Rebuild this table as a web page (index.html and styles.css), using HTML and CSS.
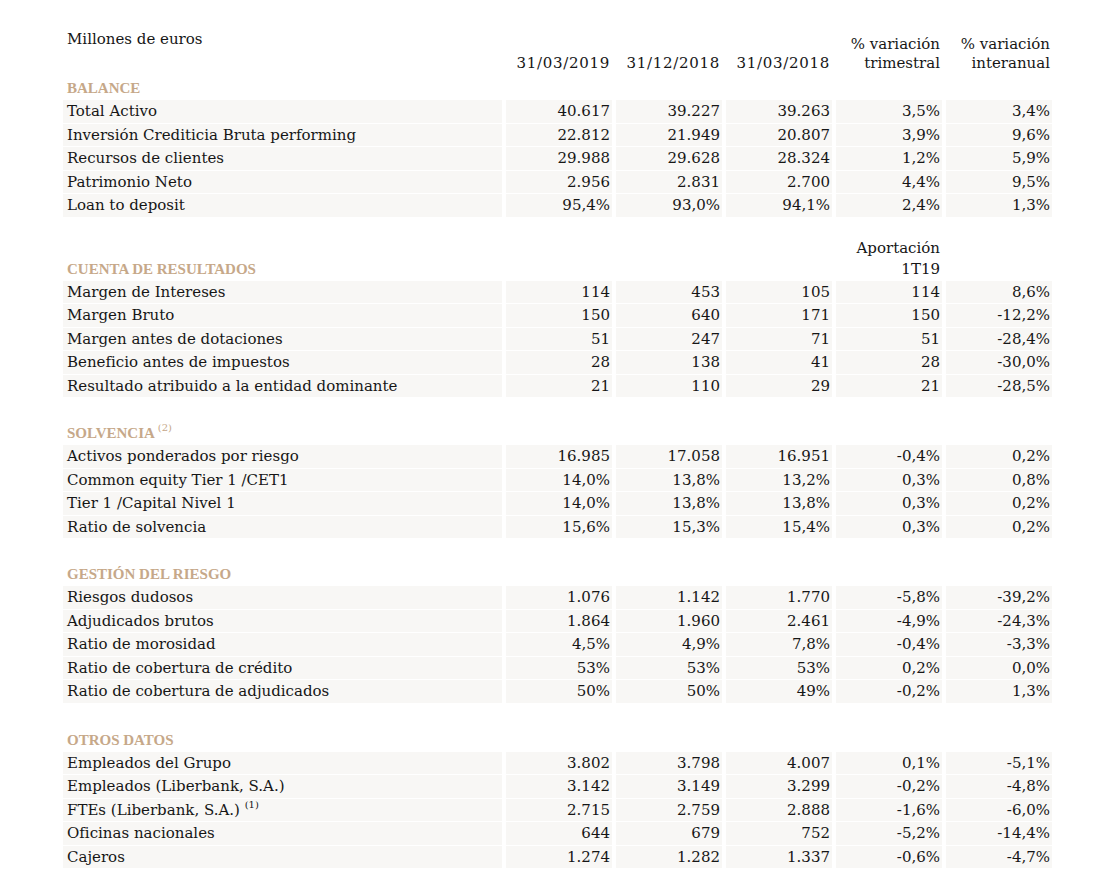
FILE: index.html
```html
<!DOCTYPE html>
<html lang="es">
<head>
<meta charset="utf-8">
<title>Datos relevantes</title>
<link rel="stylesheet" href="styles.css">
</head>
<body>
<div class="page">
<table class="kpi">
  <colgroup>
    <col class="c-label"><col class="c-num"><col class="c-num"><col class="c-num"><col class="c-num"><col class="c-num">
  </colgroup>
  <tr class="head">
    <td class="unit">Millones de euros</td>
    <td class="hcell date">31/03/2019</td>
    <td class="hcell date">31/12/2018</td>
    <td class="hcell date">31/03/2018</td>
    <td class="hcell">% variación<br>trimestral</td>
    <td class="hcell">% variación<br>interanual</td>
  </tr>
  <tr class="sec"><td class="title">BALANCE</td><td></td><td></td><td></td><td></td><td></td></tr>
  <tr class="row"><td>Total Activo</td><td>40.617</td><td>39.227</td><td>39.263</td><td>3,5%</td><td>3,4%</td></tr>
  <tr class="row"><td>Inversión Crediticia Bruta performing</td><td>22.812</td><td>21.949</td><td>20.807</td><td>3,9%</td><td>9,6%</td></tr>
  <tr class="row"><td>Recursos de clientes</td><td>29.988</td><td>29.628</td><td>28.324</td><td>1,2%</td><td>5,9%</td></tr>
  <tr class="row"><td>Patrimonio Neto</td><td>2.956</td><td>2.831</td><td>2.700</td><td>4,4%</td><td>9,5%</td></tr>
  <tr class="row"><td>Loan to deposit</td><td>95,4%</td><td>93,0%</td><td>94,1%</td><td>2,4%</td><td>1,3%</td></tr>

  <tr class="gap gap-short"><td colspan="6"></td></tr>
  <tr class="sec sec-tall"><td class="title">CUENTA DE RESULTADOS</td><td></td><td></td><td></td><td class="hcell2">Aportación<br>1T19</td><td></td></tr>
  <tr class="row"><td>Margen de Intereses</td><td>114</td><td>453</td><td>105</td><td>114</td><td>8,6%</td></tr>
  <tr class="row"><td>Margen Bruto</td><td>150</td><td>640</td><td>171</td><td>150</td><td>-12,2%</td></tr>
  <tr class="row"><td>Margen antes de dotaciones</td><td>51</td><td>247</td><td>71</td><td>51</td><td>-28,4%</td></tr>
  <tr class="row"><td>Beneficio antes de impuestos</td><td>28</td><td>138</td><td>41</td><td>28</td><td>-30,0%</td></tr>
  <tr class="row"><td>Resultado atribuido a la entidad dominante</td><td>21</td><td>110</td><td>29</td><td>21</td><td>-28,5%</td></tr>

  <tr class="gap"><td colspan="6"></td></tr>
  <tr class="sec"><td class="title">SOLVENCIA <sup class="note">(2)</sup></td><td></td><td></td><td></td><td></td><td></td></tr>
  <tr class="row"><td>Activos ponderados por riesgo</td><td>16.985</td><td>17.058</td><td>16.951</td><td>-0,4%</td><td>0,2%</td></tr>
  <tr class="row"><td>Common equity Tier 1 /CET1</td><td>14,0%</td><td>13,8%</td><td>13,2%</td><td>0,3%</td><td>0,8%</td></tr>
  <tr class="row"><td>Tier 1 /Capital Nivel 1</td><td>14,0%</td><td>13,8%</td><td>13,8%</td><td>0,3%</td><td>0,2%</td></tr>
  <tr class="row"><td>Ratio de solvencia</td><td>15,6%</td><td>15,3%</td><td>15,4%</td><td>0,3%</td><td>0,2%</td></tr>

  <tr class="gap"><td colspan="6"></td></tr>
  <tr class="sec"><td class="title">GESTIÓN DEL RIESGO</td><td></td><td></td><td></td><td></td><td></td></tr>
  <tr class="row"><td>Riesgos dudosos</td><td>1.076</td><td>1.142</td><td>1.770</td><td>-5,8%</td><td>-39,2%</td></tr>
  <tr class="row"><td>Adjudicados brutos</td><td>1.864</td><td>1.960</td><td>2.461</td><td>-4,9%</td><td>-24,3%</td></tr>
  <tr class="row"><td>Ratio de morosidad</td><td>4,5%</td><td>4,9%</td><td>7,8%</td><td>-0,4%</td><td>-3,3%</td></tr>
  <tr class="row"><td>Ratio de cobertura de crédito</td><td>53%</td><td>53%</td><td>53%</td><td>0,2%</td><td>0,0%</td></tr>
  <tr class="row"><td>Ratio de cobertura de adjudicados</td><td>50%</td><td>50%</td><td>49%</td><td>-0,2%</td><td>1,3%</td></tr>

  <tr class="gap gap-long"><td colspan="6"></td></tr>
  <tr class="sec"><td class="title">OTROS DATOS</td><td></td><td></td><td></td><td></td><td></td></tr>
  <tr class="row"><td>Empleados del Grupo</td><td>3.802</td><td>3.798</td><td>4.007</td><td>0,1%</td><td>-5,1%</td></tr>
  <tr class="row"><td>Empleados (Liberbank, S.A.)</td><td>3.142</td><td>3.149</td><td>3.299</td><td>-0,2%</td><td>-4,8%</td></tr>
  <tr class="row"><td>FTEs (Liberbank, S.A.) <sup class="note note-dark">(1)</sup></td><td>2.715</td><td>2.759</td><td>2.888</td><td>-1,6%</td><td>-6,0%</td></tr>
  <tr class="row"><td>Oficinas nacionales</td><td>644</td><td>679</td><td>752</td><td>-5,2%</td><td>-14,4%</td></tr>
  <tr class="row"><td>Cajeros</td><td>1.274</td><td>1.282</td><td>1.337</td><td>-0,6%</td><td>-4,7%</td></tr>
</table>
</div>
</body>
</html>
```

FILE: styles.css
```css
html, body {
  margin: 0;
  padding: 0;
  background: #ffffff;
}

.page {
  padding: 29px 0 0 59px;
  font-family: "DejaVu Serif", "Liberation Serif", serif;
  font-size: 15px;
  color: #161616;
}

.kpi {
  table-layout: fixed;
  width: 993px;
  border-collapse: separate;
  border-spacing: 4px 1px;
}

.c-label { width: 439px; }
.c-num { width: 106px; }

.kpi td {
  padding: 0 2px 0 4px;
  text-align: right;
  white-space: nowrap;
  vertical-align: middle;
}

.kpi td:first-child {
  text-align: left;
}

/* header */
.head td {
  line-height: 19px;
  vertical-align: bottom;
  padding-top: 5px;
  padding-bottom: 4px;
}

.head td.unit {
  vertical-align: top;
  padding-top: 0;
}

.head td.date {
  letter-spacing: 0.7px;
}

/* section titles */
.sec td {
  height: 21px;
  line-height: 21px;
  vertical-align: bottom;
}

.sec-tall td {
  height: 42px;
}

.title {
  font-family: "Liberation Serif", "Times New Roman", serif;
  font-weight: bold;
  color: #c6a889;
}

.hcell2 {
  line-height: 21px;
}

.note {
  font-family: "DejaVu Serif", serif;
  font-weight: normal;
  font-size: 10px;
  line-height: 0;
  vertical-align: 7px;
}

.note-dark {
  color: #161616;
}

/* data rows */
.row td {
  height: 21.5px;
  line-height: 21.5px;
  padding-top: 1px;
  background: #f8f7f5;
}

/* spacer rows */
.gap td {
  height: 24px;
  padding: 0;
}

.gap-short td {
  height: 19px;
}

.gap-long td {
  height: 25px;
}
```
